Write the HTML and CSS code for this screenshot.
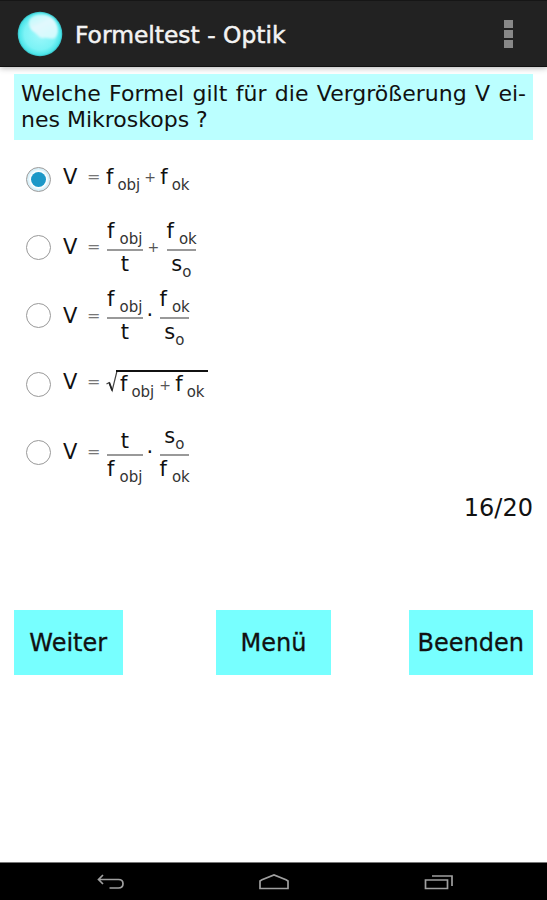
FILE: index.html
```html
<!DOCTYPE html>
<html lang="de">
<head>
  <meta charset="UTF-8">
  <title>Formeltest - Optik</title>
  <link rel="stylesheet" href="styles.css">
</head>
<body>
  <header class="action-bar">
    <svg class="logo" width="46" height="46" viewBox="0 0 46 46">
      <defs>
        <radialGradient id="ball" cx="50%" cy="50%" r="50%">
          <stop offset="0" stop-color="#9ff8fb"/>
          <stop offset="0.7" stop-color="#7cf3f6"/>
          <stop offset="0.92" stop-color="#4de6ea"/>
          <stop offset="1" stop-color="#35b9c0"/>
        </radialGradient>
        <linearGradient id="shine" x1="0" y1="0" x2="0.6" y2="1">
          <stop offset="0" stop-color="#b4fafb"/>
          <stop offset="0.5" stop-color="#e2f8fd"/>
          <stop offset="1" stop-color="#d4fafd"/>
        </linearGradient>
        <filter id="soft"><feGaussianBlur stdDeviation="0.8"/></filter>
      </defs>
      <circle cx="23" cy="23" r="22.3" fill="url(#ball)"/>
      <path d="M13 8C18 2 31 2 37 9C42 15 42 23 38 27C34 29 30 26 27 27C23 28 21 24 17 21C12 18 11 12 13 8Z" fill="url(#shine)" filter="url(#soft)"/>
    </svg>
    <h1 class="title">Formeltest - Optik</h1>
    <div class="overflow"><i></i><i></i><i></i></div>
  </header>

  <main class="content">
    <p class="question">
      <span class="full-line">Welche Formel gilt für die Vergrößerung V ei-</span>
      <span>nes Mikroskops ?</span>
    </p>

    <div class="answers">
      <div class="answer">
        <span class="radio checked"></span>
        <div class="formula flat">
          <span class="v">V</span><span class="eq">=</span>
          <span class="term">f<sub>obj</sub></span><span class="plus tight">+</span><span class="term">f<sub>ok</sub></span>
        </div>
      </div>

      <div class="answer">
        <span class="radio"></span>
        <div class="formula">
          <span class="v">V</span><span class="eq">=</span>
          <span class="frac obj"><span class="num low">f<sub>obj</sub></span><span class="den">t</span></span>
          <span class="plus">+</span>
          <span class="frac ok"><span class="num low">f<sub>ok</sub></span><span class="den s">s<sub>o</sub></span></span>
        </div>
      </div>

      <div class="answer">
        <span class="radio"></span>
        <div class="formula">
          <span class="v">V</span><span class="eq">=</span>
          <span class="frac obj"><span class="num low">f<sub>obj</sub></span><span class="den">t</span></span>
          <span class="dot">·</span>
          <span class="frac ok"><span class="num low">f<sub>ok</sub></span><span class="den s">s<sub>o</sub></span></span>
        </div>
      </div>

      <div class="answer">
        <span class="radio"></span>
        <div class="formula flat">
          <span class="v">V</span><span class="eq">=</span>
          <svg class="root" width="12" height="24" viewBox="0 0 12 24">
            <path d="M0.5 14L3.2 12.5L6.2 20.5L11 1" fill="none" stroke="#444" stroke-width="1.2"/>
            <path d="M3.2 12.5L6.2 20.5" stroke="#222" stroke-width="1.8"/>
          </svg>
          <span class="radicand"><span class="term">f<sub>obj</sub></span><span class="plus root-plus">+</span><span class="term">f<sub>ok</sub></span></span>
        </div>
      </div>

      <div class="answer">
        <span class="radio"></span>
        <div class="formula">
          <span class="v">V</span><span class="eq">=</span>
          <span class="frac obj"><span class="num">t</span><span class="den">f<sub>obj</sub></span></span>
          <span class="dot">·</span>
          <span class="frac ok"><span class="num low s">s<sub>o</sub></span><span class="den">f<sub>ok</sub></span></span>
        </div>
      </div>
    </div>

    <div class="counter">16/20</div>

    <div class="buttons">
      <button class="btn weiter">Weiter</button>
      <button class="btn menu">Menü</button>
      <button class="btn beenden">Beenden</button>
    </div>
  </main>

  <nav class="nav-bar">
    <svg width="28" height="18" viewBox="0 0 28 18">
      <path d="M6 1L1.5 5.5L6 10M1.5 5.5H21.5Q26 5.5 26 9.7Q26 14 21.5 14H12.5" fill="none" stroke="#a0a0a0" stroke-width="1.7"/>
    </svg>
    <svg width="32" height="18" viewBox="0 0 32 18">
      <path d="M2 14.5V7L4 5.8L16 1L28 5.8L30 7V14.5Z" fill="none" stroke="#a0a0a0" stroke-width="1.7"/>
    </svg>
    <svg width="30" height="18" viewBox="0 0 30 18">
      <path d="M1.5 6H23.5V14.5H1.5ZM8 2H28V12" fill="none" stroke="#a0a0a0" stroke-width="1.7"/>
    </svg>
  </nav>
</body>
</html>
```

FILE: styles.css
```css
* {
  box-sizing: border-box;
}

body {
  display: flex;
  flex-direction: column;
  height: 900px;
  margin: 0;
  background-color: #fff;
  color: #111;
  font-family: "DejaVu Sans", sans-serif;
  overflow: hidden;
}

.action-bar {
  display: flex;
  align-items: center;
  height: 67px;
  padding: 1px 34px 0 17px;
  background-color: #222;
  border-top: 1px solid #161616;
  border-bottom: 1px solid #111;
  box-shadow: 0 1px 6px rgba(0, 0, 0, 0.3);
}

.title {
  flex: 1;
  margin: 2px 0 0 12px;
  color: #f3f3f3;
  font-size: 23.4px;
  font-weight: normal;
  line-height: 30px;
  -webkit-text-stroke: 0.5px #f3f3f3;
}

.overflow {
  display: flex;
  flex-direction: column;
  gap: 2px;
}

.overflow i {
  width: 9px;
  height: 8px;
  background-color: #888;
}

.content {
  flex: 1;
  padding: 7px 14px 0;
}

.question {
  height: 66px;
  margin: 0;
  padding: 7px 7px 0;
  background-color: #bff;
  font-size: 22px;
  line-height: 26px;
}

.question span {
  display: block;
}

.question .full-line {
  text-align-last: justify;
  white-space: nowrap;
}

.answers {
  padding: 5px 0 0 12px;
}

.answer {
  display: flex;
  align-items: center;
  height: 68.3px;
}

.radio {
  display: flex;
  align-items: center;
  justify-content: center;
  width: 25px;
  height: 25px;
  margin-right: 12px;
  border: 1.5px solid #999;
  border-radius: 50%;
}

.radio.checked {
  box-shadow: inset 0 0 2px 2px #d3eff9;
}

.radio.checked::after {
  content: "";
  width: 15px;
  height: 15px;
  border-radius: 50%;
  background-color: #1b98c8;
}

/* The fraction bar is the centre line, text is lifted to sit around it */
.formula {
  display: flex;
  align-items: center;
  padding-top: 5px;
  font-size: 21px;
  line-height: 24px;
}

.formula.flat {
  padding-top: 1px;
}

.formula sub {
  margin-left: 5px;
  font-size: 15px;
  line-height: 0;
  vertical-align: -6px;
  color: #333;
}

.v {
  width: 24px;
  margin-bottom: 5px;
}

.eq {
  width: 19px;
  margin-bottom: 5px;
  color: #777;
  font-size: 16px;
}

.term {
  margin-bottom: 6px;
}

.term sub {
  margin-left: 4px;
}

.plus {
  width: 23px;
  margin-bottom: 5px;
  padding-left: 5px;
  color: #555;
  font-size: 14px;
}

.plus.tight {
  width: 20px;
  padding-left: 4px;
}

.dot {
  width: 16px;
  margin-bottom: 6px;
  padding-left: 4px;
}

.frac {
  display: flex;
  flex-direction: column;
  margin-left: 1px;
  text-align: center;
  white-space: nowrap;
}

.frac.obj {
  width: 35.5px;
}

.frac.ok {
  width: 29.5px;
}

.num {
  height: 33px;
  padding-top: 6px;
  border-bottom: 2px solid #999;
}

.num.low {
  padding-top: 1px;
}

.den {
  height: 31px;
  padding-top: 1px;
}

.s sub {
  margin-left: 0;
}

.root {
  align-self: flex-start;
  margin: 0 -2px 0 0;
}

.radicand {
  display: flex;
  align-items: center;
  height: 30px;
  padding: 3px 3px 0 4px;
  border-top: 2px solid #111;
}

.root-plus {
  width: 21px;
}

.counter {
  margin-top: 7px;
  font-size: 24px;
  line-height: 30px;
  text-align: right;
}

.buttons {
  display: flex;
  justify-content: space-between;
  margin-top: 87px;
}

.btn {
  height: 65px;
  padding: 0;
  border: none;
  background-color: #7ff;
  color: #111;
  font-family: inherit;
  font-size: 24px;
  -webkit-text-stroke: 0.3px #111;
}

.weiter {
  width: 108.5px;
}

.menu {
  width: 114.5px;
  margin-right: -16px;
}

.beenden {
  width: 124.5px;
}

.nav-bar {
  display: flex;
  align-items: center;
  justify-content: space-between;
  height: 38px;
  padding: 2px 93px 0 96.5px;
  border-top: 1px solid #777;
  background-color: #000;
}
```
